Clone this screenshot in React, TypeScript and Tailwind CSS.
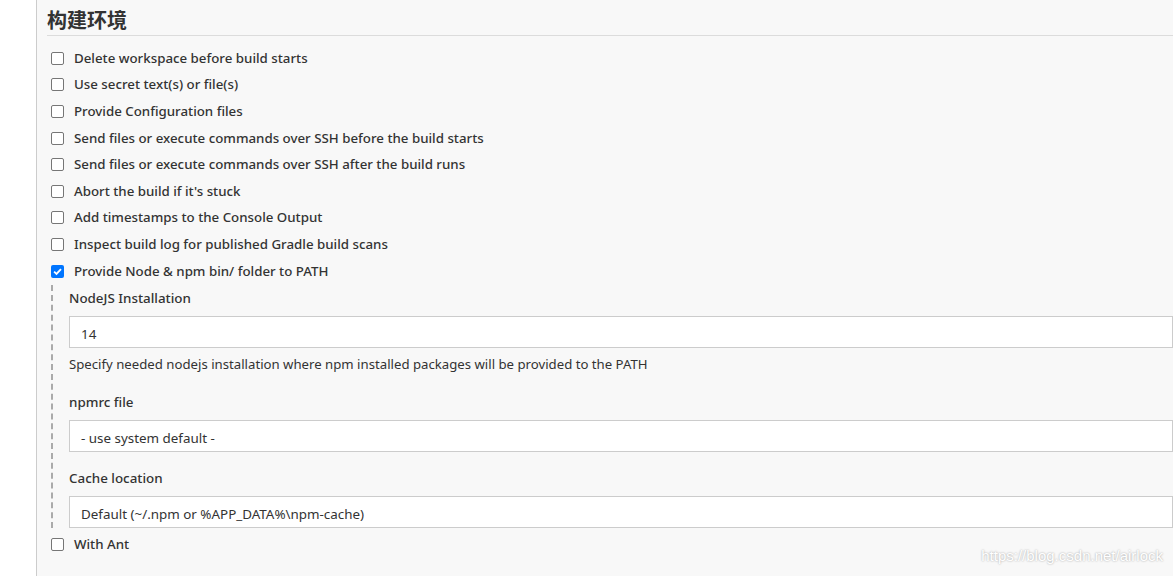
import React from "react";

const options = [
  { label: "Delete workspace before build starts", checked: false },
  { label: "Use secret text(s) or file(s)", checked: false },
  { label: "Provide Configuration files", checked: false },
  { label: "Send files or execute commands over SSH before the build starts", checked: false },
  { label: "Send files or execute commands over SSH after the build runs", checked: false },
  { label: "Abort the build if it's stuck", checked: false },
  { label: "Add timestamps to the Console Output", checked: false },
  { label: "Inspect build log for published Gradle build scans", checked: false },
  { label: "Provide Node & npm bin/ folder to PATH", checked: true },
];

const Checkbox: React.FC<{ checked?: boolean }> = ({ checked }) =>
  checked ? (
    <span className="flex h-[13px] w-[13px] items-center justify-center rounded-[2px] bg-[#0075ff]">
      <svg viewBox="0 0 12 12" className="h-[11px] w-[11px]">
        <path d="M2.3 6.2 L4.9 8.7 L9.8 3.3" fill="none" stroke="#fff" strokeWidth="2" />
      </svg>
    </span>
  ) : (
    <span className="block h-[13px] w-[13px] rounded-[2px] border border-[#767676] bg-white" />
  );

const CheckRow: React.FC<{ label: string; checked?: boolean }> = ({ label, checked }) => (
  <div className="flex h-[26.6px] items-center pl-[4px]">
    <Checkbox checked={checked} />
    <span className="ml-[10px] pt-[1px] text-[13.3px] font-medium text-[#333]">{label}</span>
  </div>
);

const Field: React.FC<{ label: string; value: string }> = ({ label, value }) => (
  <div>
    <div className="flex h-[20px] items-center text-[13.4px] font-medium text-[#333]">{label}</div>
    <div className="mt-[8px] flex h-[32px] items-center border border-[#ccc] bg-white pl-[11px] pt-[3px] text-[13.4px] text-[#333]">
      {value}
    </div>
  </div>
);

export default function App() {
  return (
    <div
      className="relative flex h-[576px] w-full overflow-hidden bg-[#f8f8f8]"
      style={{ fontFamily: '"Noto Sans", "Open Sans", "Noto Sans CJK SC", sans-serif' }}
    >
      <div className="w-[37px] shrink-0 border-r border-[#cccccc] bg-white" />
      <div className="flex min-w-0 flex-1 flex-col pl-[10px]">
        <div className="flex h-[36px] items-center border-b border-[#dcdcdc] pt-[6px]">
          <h2 className="text-[20px] font-bold leading-none text-[#333]">构建环境</h2>
        </div>
        <div className="mt-[9px] flex flex-col">
          {options.map((o) => (
            <CheckRow key={o.label} label={o.label} checked={o.checked} />
          ))}
        </div>
        <div className="ml-[4px] mt-[1px] border-l-2 border-dashed border-[#aaa] pl-[16px] pt-[3px]">
          <Field label="NodeJS Installation" value="14" />
          <div className="flex h-[34px] items-center text-[13.2px] text-[#333]">
            Specify needed nodejs installation where npm installed packages will be provided to the PATH
          </div>
          <div className="mt-[10px]">
            <Field label="npmrc file" value="- use system default -" />
          </div>
          <div className="mt-[16px]">
            <Field label="Cache location" value="Default (~/.npm or %APP_DATA%\npm-cache)" />
          </div>
        </div>
        <div className="mt-[3px]">
          <CheckRow label="With Ant" />
        </div>
      </div>
      <div
        className="absolute bottom-[9px] right-[10px] text-[15px] text-white"
        style={{ fontFamily: '"Liberation Sans", Arial, sans-serif', textShadow: "0 0 2px #999" }}
      >
        https://blog.csdn.net/airlock
      </div>
    </div>
  );
}
